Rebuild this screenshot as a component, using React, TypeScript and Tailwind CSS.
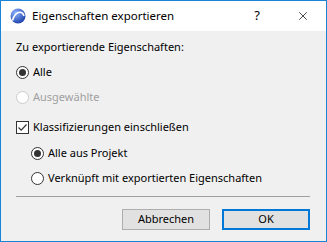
import { X } from 'lucide-react';

function Radio({ checked, disabled }: { checked?: boolean; disabled?: boolean }) {
    return (
        <span
            className={`w-[13px] h-[13px] rounded-full border flex items-center justify-center bg-white shrink-0 ${
                disabled ? 'border-[#cccccc]' : 'border-[#333333]'
            }`}
        >
            {checked && <span className="w-[7px] h-[7px] rounded-full bg-[#333333]" />}
        </span>
    );
}

function Checkbox() {
    return (
        <span className="w-[13px] h-[13px] border border-[#333333] bg-white flex items-center justify-center shrink-0">
            <svg width="11" height="11" viewBox="0 0 11 11">
                <path d="M1.5 5.5 L4.2 8.2 L9.5 2.5" fill="none" stroke="#333" strokeWidth="1.2" />
            </svg>
        </span>
    );
}

function AppIcon() {
    return (
        <svg width="16" height="16" viewBox="0 0 16 16">
            <defs>
                <radialGradient id="g" cx="35%" cy="30%" r="75%">
                    <stop offset="0%" stopColor="#8fb4ff" />
                    <stop offset="100%" stopColor="#1a3fa8" />
                </radialGradient>
            </defs>
            <circle cx="8" cy="8" r="7.5" fill="url(#g)" />
            <path d="M2.5 12.5 C4 7 7 4 10.5 4.2 C12.5 4.4 13.5 6 14 8" fill="none" stroke="#fff" strokeWidth="1.6" />
        </svg>
    );
}

export default function App() {
    return (
        <div
            className="w-[327px] h-[242px] border border-[#1883d7] bg-[#f0f0f0] flex flex-col text-[11px] text-black"
            style={{ fontFamily: '"Noto Sans", "Open Sans", sans-serif' }}
        >
            {/* Title bar */}
            <div className="h-[30px] bg-white flex items-center shrink-0">
                <div className="pl-[9px] pr-[6px] flex items-center">
                    <AppIcon />
                </div>
                <span className="text-[11.5px] mt-[-1px]">Eigenschaften exportieren</span>
                <span className="ml-auto w-[46px] text-center text-[13px]">?</span>
                <span className="w-[46px] flex justify-center">
                    <X className="w-[14px] h-[14px]" strokeWidth={1.2} />
                </span>
            </div>

            {/* Body */}
            <div className="flex flex-col px-[15px] pt-[8px]">
                <div className="h-[15px] leading-[15px]">Zu exportierende Eigenschaften:</div>
                <div className="flex items-center gap-[4px] mt-[11px] h-[15px]">
                    <Radio checked />
                    <span>Alle</span>
                </div>
                <div className="flex items-center gap-[4px] mt-[10px] h-[15px] text-[#a0a0a0]">
                    <Radio disabled />
                    <span>Ausgewählte</span>
                </div>
                <div className="flex items-center gap-[4px] mt-[15px] h-[15px]">
                    <Checkbox />
                    <span>Klassifizierungen einschließen</span>
                </div>
                <div className="flex items-center gap-[4px] mt-[11px] h-[15px] pl-[15px]">
                    <Radio checked />
                    <span>Alle aus Projekt</span>
                </div>
                <div className="flex items-center gap-[4px] mt-[10px] h-[15px] pl-[15px]">
                    <Radio />
                    <span>Verknüpft mit exportierten Eigenschaften</span>
                </div>
                <div className="h-px bg-[#a0a0a0] mt-[10px] mr-[1px]" />
                <div className="flex justify-end gap-[12px] mt-[12px] mr-[1px]">
                    <button className="w-[88px] h-[21px] border border-[#adadad] bg-[#e1e1e1] flex items-center justify-center">
                        Abbrechen
                    </button>
                    <button className="w-[88px] h-[21px] border-2 border-[#0078d7] bg-[#e1e1e1] flex items-center justify-center">
                        OK
                    </button>
                </div>
            </div>
        </div>
    );
}
